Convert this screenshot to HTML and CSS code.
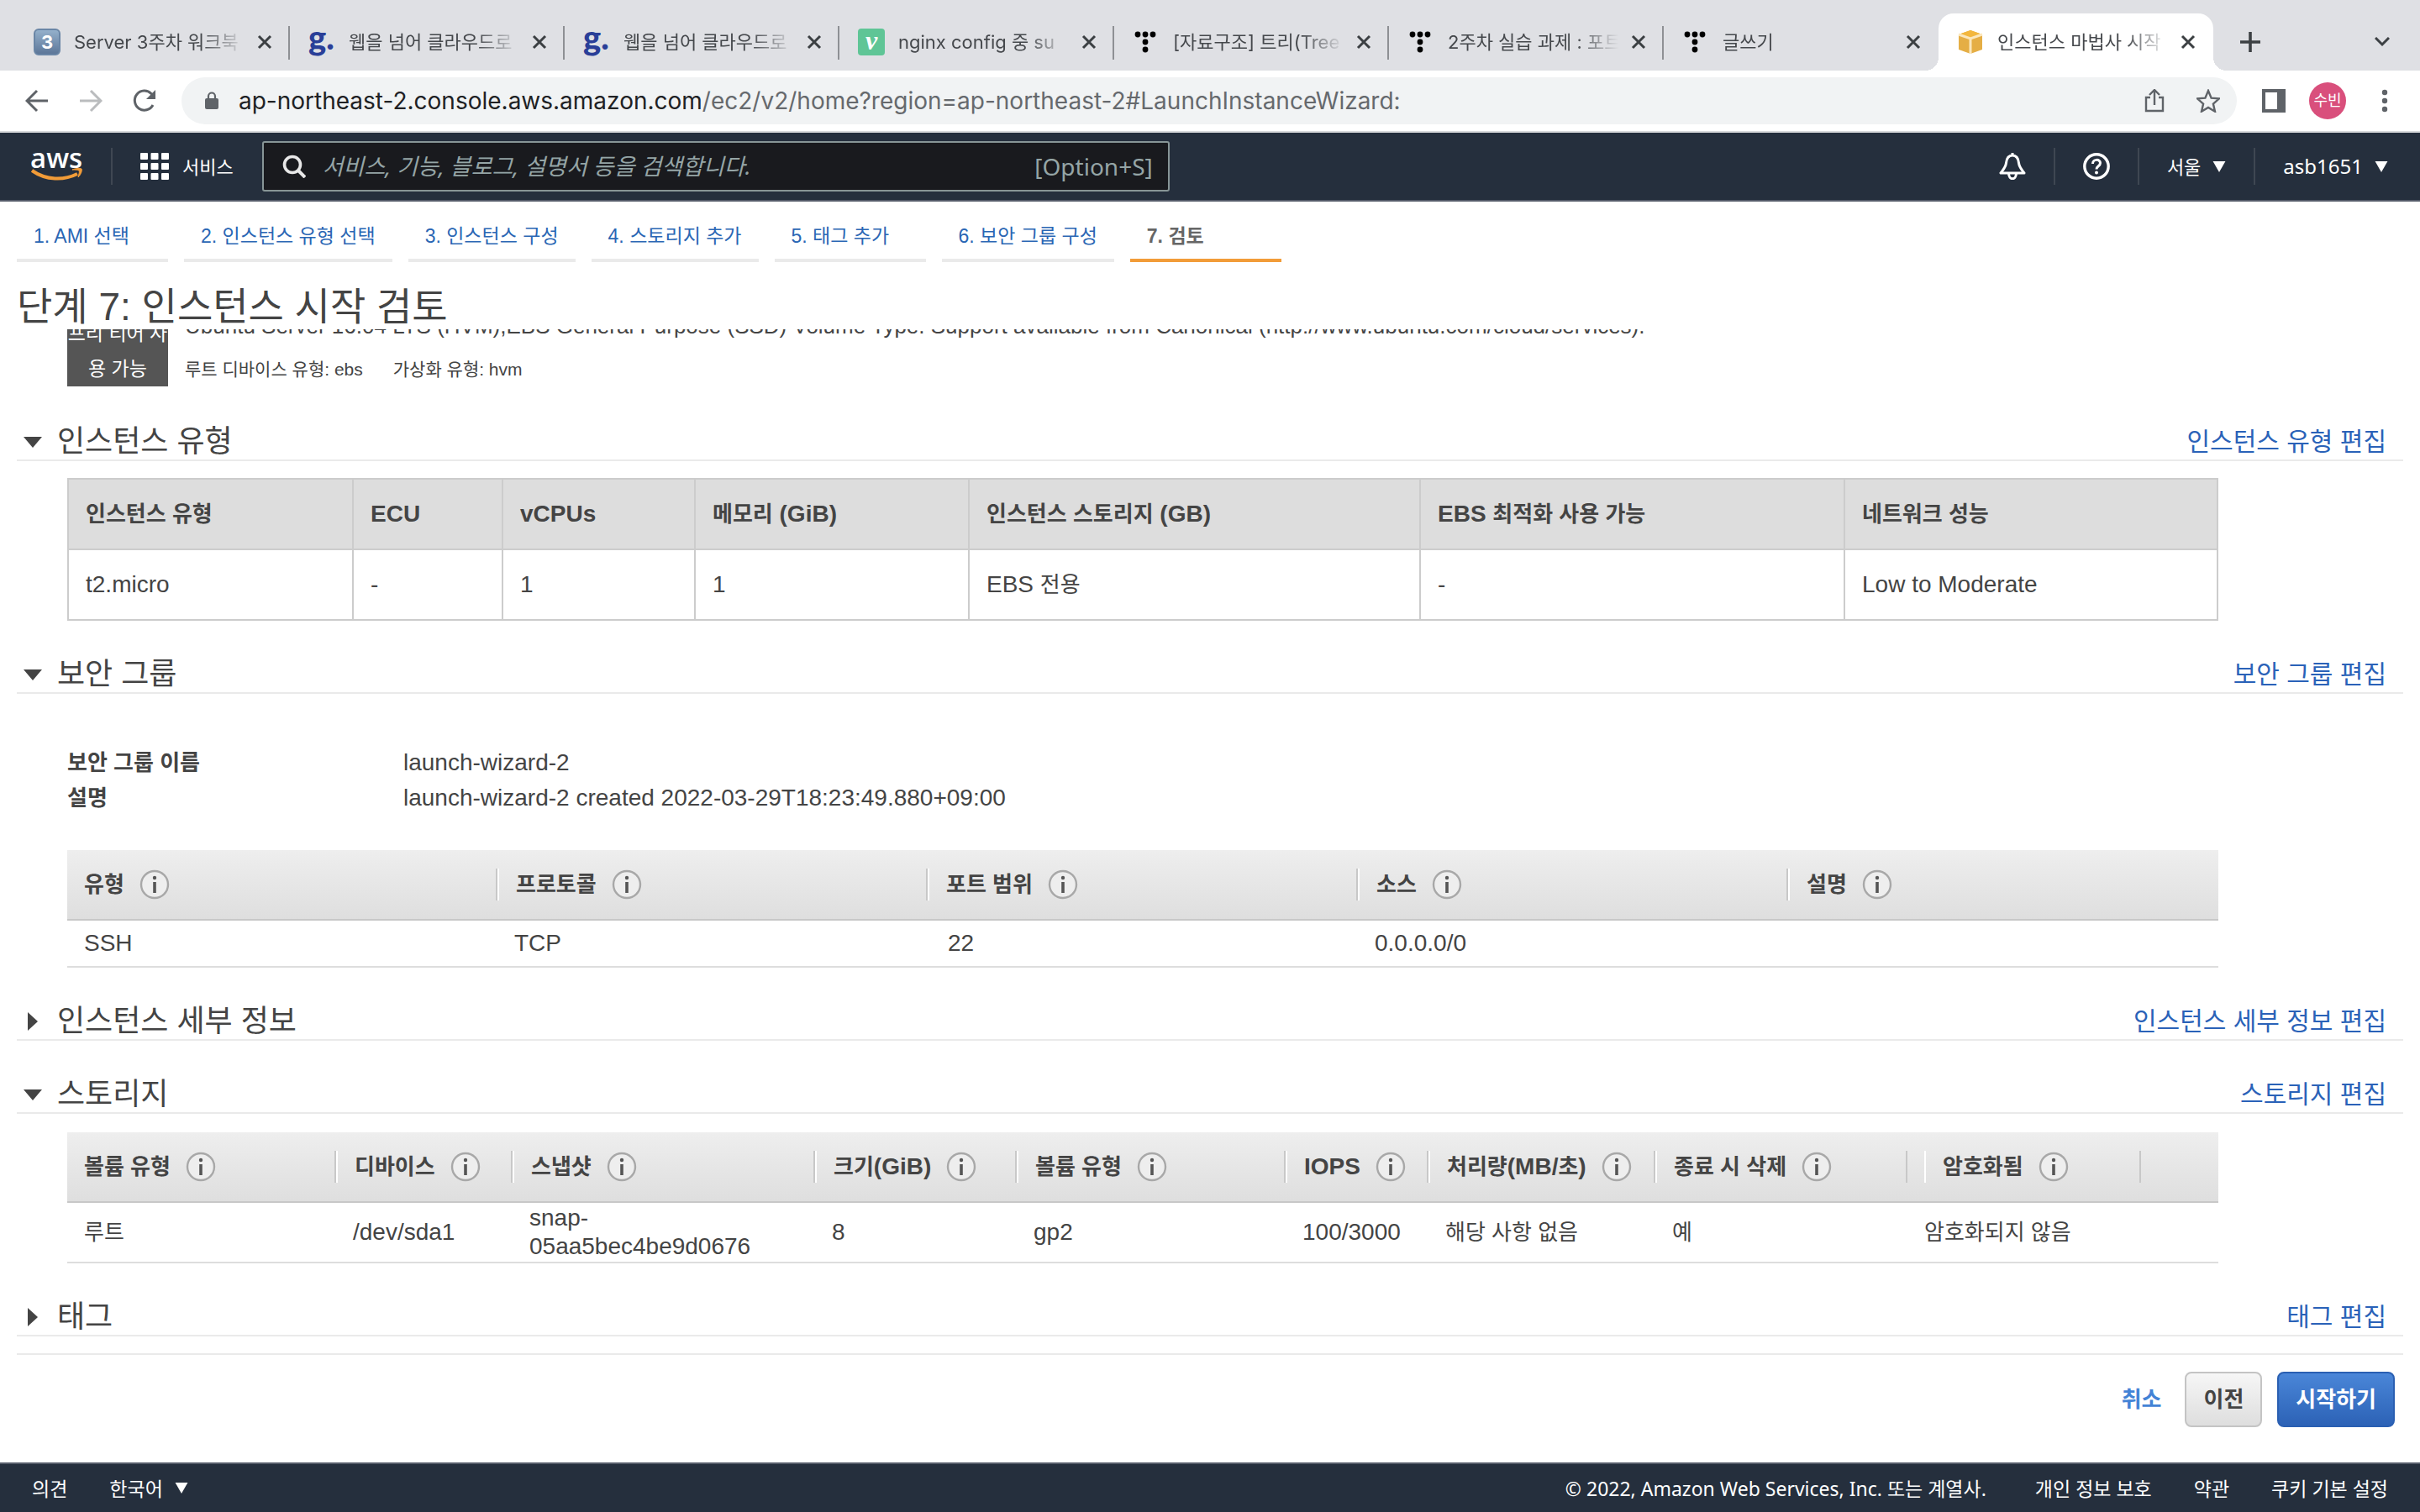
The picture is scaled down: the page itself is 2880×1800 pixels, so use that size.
FILE: index.html
```html
<!DOCTYPE html>
<html lang="ko">
<head>
<meta charset="utf-8">
<meta name="viewport" content="width=device-width, initial-scale=1">
<title>인스턴스 마법사 시작</title>
<link rel="stylesheet" href="styles.css">
</head>
<body>
<svg class="defs" aria-hidden="true">
  <symbol id="x" viewBox="0 0 20 20"><path d="M3 3l14 14M17 3L3 17" stroke="currentColor" stroke-width="3" fill="none"/></symbol>
  <symbol id="t" viewBox="0 0 28 28"><g fill="#000"><circle cx="4" cy="5" r="3.4"/><circle cx="13" cy="5" r="3.4"/><circle cx="22" cy="5" r="3.4"/><circle cx="13" cy="14" r="3.4"/><circle cx="13" cy="23" r="3.4"/></g></symbol>
  <symbol id="info" viewBox="0 0 36 36"><circle cx="18" cy="18" r="16" fill="#eee" stroke="#a8a8a8" stroke-width="2.4"/><circle cx="18" cy="10" r="2.2" fill="#555"/><path d="M18 15v13" stroke="#555" stroke-width="3.6"/></symbol>
  <symbol id="down" viewBox="0 0 16 14"><path d="M0 0h16L8 14z" fill="currentColor"/></symbol>
</svg>

<div class="tabstrip">
  <div class="tab"><span class="fav keycap">3</span><span class="tab-title">Server 3주차 워크북</span><button class="close" aria-label="닫기"><svg><use href="#x"/></svg></button></div>
  <div class="tab"><span class="fav goorm">g.</span><span class="tab-title">웹을 넘어 클라우드로</span><button class="close" aria-label="닫기"><svg><use href="#x"/></svg></button></div>
  <div class="tab"><span class="fav goorm">g.</span><span class="tab-title">웹을 넘어 클라우드로</span><button class="close" aria-label="닫기"><svg><use href="#x"/></svg></button></div>
  <div class="tab"><span class="fav velog">v</span><span class="tab-title">nginx config 중 su</span><button class="close" aria-label="닫기"><svg><use href="#x"/></svg></button></div>
  <div class="tab"><span class="fav"><svg class="dots"><use href="#t"/></svg></span><span class="tab-title">[자료구조] 트리(Tree</span><button class="close" aria-label="닫기"><svg><use href="#x"/></svg></button></div>
  <div class="tab"><span class="fav"><svg class="dots"><use href="#t"/></svg></span><span class="tab-title">2주차 실습 과제 : 포트</span><button class="close" aria-label="닫기"><svg><use href="#x"/></svg></button></div>
  <div class="tab last"><span class="fav"><svg class="dots"><use href="#t"/></svg></span><span class="tab-title">글쓰기</span><button class="close" aria-label="닫기"><svg><use href="#x"/></svg></button></div>
  <div class="tab active"><span class="fav"><svg viewBox="0 0 32 32"><path d="M2 7l14-5 14 5v18l-14 5-14-5z" fill="#e5ae45"/><path d="M2 7l14-5 14 5-14 5z" fill="#f3b73e"/><path d="M2 7l14 5 14-5M16 12v18" stroke="#fbe7bd" stroke-width="3" fill="none"/></svg></span><span class="tab-title">인스턴스 마법사 시작</span><button class="close" aria-label="닫기"><svg><use href="#x"/></svg></button></div>
  <button class="newtab" aria-label="새 탭"><svg viewBox="0 0 24 24"><path d="M12 0v24M0 12h24" stroke="#3c4043" stroke-width="3.6"/></svg></button>
  <button class="tabsearch" aria-label="탭 검색"><svg viewBox="0 0 18 12"><path d="M1 1l8 8 8-8" stroke="#3c4043" stroke-width="3" fill="none"/></svg></button>
</div>

<div class="toolbar">
  <button class="nav-btn" aria-label="뒤로"><svg viewBox="0 0 28 28"><path d="M27 14H3M14 2L2 14l12 12" stroke="#5f6368" stroke-width="3" fill="none"/></svg></button>
  <button class="nav-btn" aria-label="앞으로"><svg viewBox="0 0 28 28"><path d="M1 14h24M14 2l12 12-12 12" stroke="#babcbe" stroke-width="3" fill="none"/></svg></button>
  <button class="nav-btn" aria-label="새로고침"><svg viewBox="0 0 28 28"><path d="M24 19a11.500 11.500 0 1 1-2-13.500l3 3" stroke="#5f6368" stroke-width="3" fill="none"/><path d="M27 1v11H16z" fill="#5f6368"/></svg></button>
  <div class="omnibox">
    <svg class="lock" viewBox="0 0 16 22"><rect y="8" width="16" height="13" rx="2" fill="#5f6368"/><path d="M4 9V5.500a4 4 0 0 1 8 0V9" stroke="#5f6368" stroke-width="2.200" fill="none"/></svg>
    <span class="url"><b>ap-northeast-2.console.aws.amazon.com</b>/ec2/v2/home?region=ap-northeast-2#LaunchInstanceWizard:</span>
    <button class="nav-btn" aria-label="공유"><svg viewBox="0 0 28 28"><path d="M9 10H4v16h20V10h-5M14 19V2M8 7l6-6 6 6" stroke="#5f6368" stroke-width="2.400" fill="none"/></svg></button>
    <button class="nav-btn" aria-label="북마크"><svg viewBox="0 0 28 28"><path d="M14 2l3.600 8.600 9.400.8-7.100 6.200 2.100 9.100L14 21.900l-8 4.800 2.100-9.100L1 11.400l9.400-.8z" stroke="#5f6368" stroke-width="2.400" fill="none"/></svg></button>
  </div>
  <button class="nav-btn" aria-label="측면 패널"><svg viewBox="0 0 28 28"><path d="M0 0h28v28H0zM4 4v20h14V4z" fill="#5f6368" fill-rule="evenodd"/></svg></button>
  <button class="profile">수빈</button>
  <button class="nav-btn menu" aria-label="메뉴"><svg viewBox="0 0 28 28"><g fill="#5f6368"><circle cx="14" cy="4" r="3.200"/><circle cx="14" cy="14" r="3.200"/><circle cx="14" cy="24" r="3.200"/></g></svg></button>
</div>

<header class="aws">
  <a class="logo" href="#" aria-label="AWS"><span>aws</span><svg viewBox="0 0 64 16"><path d="M2 3c17 12 38 12 54 4" stroke="#f29c38" stroke-width="4" fill="none"/><path d="M50 2c5-2 10-2 11-1s0 6-4 10c1-4 2-7 1-8s-4-1-8-1z" fill="#f29c38" stroke="#f29c38"/></svg></a>
  <a class="services" href="#"><svg viewBox="0 0 34 32"><g fill="#fff"><rect width="9" height="8" rx="1"/><rect x="12.500" width="9" height="8" rx="1"/><rect x="25" width="9" height="8" rx="1"/><rect y="12" width="9" height="8" rx="1"/><rect x="12.500" y="12" width="9" height="8" rx="1"/><rect x="25" y="12" width="9" height="8" rx="1"/><rect y="24" width="9" height="8" rx="1"/><rect x="12.500" y="24" width="9" height="8" rx="1"/><rect x="25" y="24" width="9" height="8" rx="1"/></g></svg>서비스</a>
  <label class="search">
    <svg viewBox="0 0 28 28"><circle cx="12" cy="12" r="9.500" stroke="#e8e8e8" stroke-width="3.600" fill="none"/><path d="M18.500 18.500L27 27" stroke="#e8e8e8" stroke-width="4"/></svg>
    <input type="search" aria-label="검색" placeholder="서비스, 기능, 블로그, 설명서 등을 검색합니다.">
    <span>[Option+S]</span>
  </label>
  <nav class="account">
    <a href="#" aria-label="알림"><svg class="ico" viewBox="0 0 32 32"><path d="M16 3c-5 0-7 4-7.500 9-.5 5-3.500 8-6.500 12h28c-3-4-6-7-6.500-12-.5-5-2.500-9-7.500-9z" stroke="#fff" stroke-width="3" fill="none" stroke-linejoin="round"/><path d="M11.500 24c0 9 9 9 9 0" stroke="#fff" stroke-width="3" fill="none"/><path d="M16 0v4" stroke="#fff" stroke-width="3"/></svg></a>
    <a href="#" aria-label="도움말"><svg class="ico" viewBox="0 0 32 32"><circle cx="16" cy="16" r="14.200" stroke="#fff" stroke-width="3.400" fill="none"/><path d="M11.500 13c0-6 9-6 9-1 0 4-4.500 3.500-4.500 7.500" stroke="#fff" stroke-width="3" fill="none"/><circle cx="16" cy="23.600" r="2" fill="#fff"/></svg></a>
    <a href="#">서울<svg class="caret"><use href="#down"/></svg></a>
    <a href="#" class="latin">asb1651<svg class="caret"><use href="#down"/></svg></a>
  </nav>
</header>

<main>
  <nav class="steps">
    <a href="#">1. AMI 선택</a><a href="#">2. 인스턴스 유형 선택</a><a href="#">3. 인스턴스 구성</a><a href="#">4. 스토리지 추가</a><a href="#">5. 태그 추가</a><a href="#">6. 보안 그룹 구성</a><a href="#" class="current" aria-current="step">7. 검토</a>
  </nav>
  <h1>단계 7: 인스턴스 시작 검토</h1>

  <div class="scroll">
    <div class="ami">
      <div class="badge">프리 티어 사<br>용 가능</div>
      <div class="ami-text">
        <p>Ubuntu Server 16.04 LTS (HVM),EBS General Purpose (SSD) Volume Type. Support available from Canonical (http://www.ubuntu.com/cloud/services).</p>
        <p class="meta"><span>루트 디바이스 유형: ebs</span><span>가상화 유형: hvm</span></p>
      </div>
    </div>

    <section>
      <div class="head"><h2><button><svg class="tri" viewBox="0 0 24 24"><path d="M1 6h22L12 19z" fill="#444"/></svg>인스턴스 유형</button></h2><a href="#">인스턴스 유형 편집</a></div>
      <table class="grid">
        <colgroup><col class="w339"><col class="w178"><col class="w229"><col class="w326"><col class="w537"><col class="w505"><col></colgroup>
        <thead><tr><th class="ko">인스턴스 유형</th><th>ECU</th><th>vCPUs</th><th><span class="ko">메모리</span> (GiB)</th><th><span class="ko">인스턴스 스토리지</span> (GB)</th><th>EBS <span class="ko">최적화 사용 가능</span></th><th class="ko">네트워크 성능</th></tr></thead>
        <tbody><tr><td>t2.micro</td><td>-</td><td>1</td><td>1</td><td>EBS <span class="ko">전용</span></td><td>-</td><td>Low to Moderate</td></tr></tbody>
      </table>
    </section>

    <section>
      <div class="head"><h2><button><svg class="tri" viewBox="0 0 24 24"><path d="M1 6h22L12 19z" fill="#444"/></svg>보안 그룹</button></h2><a href="#">보안 그룹 편집</a></div>
      <dl>
        <dt>보안 그룹 이름</dt><dd>launch-wizard-2</dd>
        <dt>설명</dt><dd>launch-wizard-2 created 2022-03-29T18:23:49.880+09:00</dd>
      </dl>
      <table class="list">
        <thead><tr>
          <th><div class="ko">유형<svg><use href="#info"/></svg></div></th><th><div class="ko">프로토콜<svg><use href="#info"/></svg></div></th><th><div class="ko">포트 범위<svg><use href="#info"/></svg></div></th><th><div class="ko">소스<svg><use href="#info"/></svg></div></th><th><div class="ko">설명<svg><use href="#info"/></svg></div></th>
        </tr></thead>
        <tbody><tr><td>SSH</td><td>TCP</td><td class="num">22</td><td>0.0.0.0/0</td><td></td></tr></tbody>
      </table>
    </section>

    <section>
      <div class="head"><h2><button><svg class="tri" viewBox="0 0 24 24"><path d="M6 1v22l12-11z" fill="#444"/></svg>인스턴스 세부 정보</button></h2><a href="#">인스턴스 세부 정보 편집</a></div>
    </section>

    <section>
      <div class="head"><h2><button><svg class="tri" viewBox="0 0 24 24"><path d="M1 6h22L12 19z" fill="#444"/></svg>스토리지</button></h2><a href="#">스토리지 편집</a></div>
      <table class="list storage">
        <colgroup><col class="w320"><col class="w210"><col class="w360"><col class="w240"><col class="w320"><col class="w170"><col class="w270"><col class="w300"><col class="w278"><col></colgroup>
        <thead><tr>
          <th><div class="ko">볼륨 유형<svg><use href="#info"/></svg></div></th>
          <th><div class="ko">디바이스<svg><use href="#info"/></svg></div></th>
          <th><div class="ko">스냅샷<svg><use href="#info"/></svg></div></th>
          <th><div><span class="ko">크기</span>(GiB)<svg><use href="#info"/></svg></div></th>
          <th><div class="ko">볼륨 유형<svg><use href="#info"/></svg></div></th>
          <th><div>IOPS<svg><use href="#info"/></svg></div></th>
          <th><div><span class="ko">처리량</span>(MB/<span class="ko">초</span>)<svg><use href="#info"/></svg></div></th>
          <th><div class="ko">종료 시 삭제<svg><use href="#info"/></svg></div></th>
          <th class="inset"><div class="ko">암호화됨<svg><use href="#info"/></svg></div></th>
          <th></th>
        </tr></thead>
        <tbody><tr><td class="ko">루트</td><td>/dev/sda1</td><td>snap-<br>05aa5bec4be9d0676</td><td>8</td><td>gp2</td><td>100/3000</td><td class="ko">해당 사항 없음</td><td class="ko">예</td><td class="ko">암호화되지 않음</td><td></td></tr></tbody>
      </table>
    </section>

    <section>
      <div class="head"><h2><button><svg class="tri" viewBox="0 0 24 24"><path d="M6 1v22l12-11z" fill="#444"/></svg>태그</button></h2><a href="#">태그 편집</a></div>
    </section>
  </div>

  <div class="actions">
    <a href="#">취소</a><button class="btn">이전</button><button class="btn primary">시작하기</button>
  </div>
</main>

<footer>
  <a href="#">의견</a>
  <a href="#">한국어<svg class="caret"><use href="#down"/></svg></a>
  <span class="copy">© 2022, Amazon Web Services, Inc. 또는 계열사.</span>
  <a href="#">개인 정보 보호</a>
  <a href="#">약관</a>
  <a href="#">쿠키 기본 설정</a>
</footer>
</body>
</html>
```
FILE: styles.css
```css
* { box-sizing: border-box; }
body {
  margin: 0;
  min-height: 100vh;
  display: flex;
  flex-direction: column;
  background: #fff;
  color: #444;
  font: 28px/34px "Liberation Sans", "Noto Sans CJK KR", sans-serif;
}
a { text-decoration: none; color: inherit; }
button { border: 0; padding: 0; background: none; font: inherit; color: inherit; }
svg { display: block; flex: none; }
h1, h2, p, dl, dd { margin: 0; font-weight: 400; }
.defs { position: absolute; width: 0; height: 0; }
.ko { font-size: 26px; }

/* browser tabs */
.tabstrip {
  display: flex;
  height: 84px;
  padding: 16px 36px 0 18px;
  background: #dfe0e4;
  color: #45484c;
  font: 22px/32px Inter, "Noto Sans CJK KR", sans-serif;
}
.tab {
  position: relative;
  flex: 0 1 327px;
  min-width: 0;
  display: flex;
  align-items: center;
  padding: 0 20px 0 22px;
}
.tab::after {
  content: "";
  position: absolute;
  right: 0;
  top: 15px;
  width: 2px;
  height: 40px;
  background: #8e9094;
}
.tab.active::after, .tab.last::after { display: none; }
.tab.active { background: #fff; border-radius: 18px 18px 0 0; }
.tab.active::before {
  content: "";
  position: absolute;
  left: -16px;
  right: -16px;
  bottom: 0;
  height: 16px;
  background:
    radial-gradient(circle at 0 0, #dfe0e4 16px, #fff 16px) left / 16px 16px no-repeat,
    radial-gradient(circle at 100% 0, #dfe0e4 16px, #fff 16px) right / 16px 16px no-repeat;
}
.fav { flex: none; width: 32px; height: 32px; margin-right: 16px; }
.fav svg { width: 32px; height: 32px; }
.fav .dots { width: 28px; height: 28px; margin: 2px 0 0 2px; }
.keycap { border-radius: 6px; background: linear-gradient(#94b0cb, #5d7799); border: 2px solid #6a86a6; color: #fff; font-weight: 700; line-height: 28px; text-align: center; }
.goorm { color: #2a3f98; font: 900 40px/20px Lato, sans-serif; }
.velog { border-radius: 4px; background: #5fc596; color: #fff; font: italic 700 32px/28px "Liberation Serif", serif; text-align: center; }
.tab-title {
  flex: 1;
  overflow: hidden;
  white-space: nowrap;
  mask-image: linear-gradient(to right, #000 75%, transparent);
}
.close { margin-left: 14px; color: #3c4043; }
.close svg { width: 20px; height: 20px; }
.newtab { margin-left: 32px; }
.newtab svg { width: 24px; height: 24px; }
.tabsearch { margin-left: auto; }
.tabsearch svg { width: 18px; height: 12px; }

/* address bar */
.toolbar {
  display: flex;
  align-items: center;
  gap: 36px;
  height: 74px;
  padding: 0 28px 0 30px;
  border-bottom: 2px solid #d8dadc;
}
.nav-btn svg { width: 28px; height: 28px; }
.menu { margin-left: -4px; }
.omnibox {
  flex: 1;
  display: flex;
  align-items: center;
  gap: 36px;
  height: 56px;
  margin-left: -6px;
  margin-right: -6px;
  padding: 0 20px 0 28px;
  border-radius: 28px;
  background: #f1f3f4;
  color: #66696d;
  font: 28px/36px Inter, sans-serif;
}
.lock { width: 16px; height: 22px; margin-right: -12px; }
.url { flex: 1; overflow: hidden; white-space: nowrap; }
.url b { font-weight: 400; color: #202124; }
.profile { width: 44px; height: 44px; margin-left: -8px; border-radius: 50%; background: #d94f7c; color: #fff; font-size: 18px; white-space: nowrap; }

/* console header */
.aws {
  display: flex;
  align-items: center;
  height: 82px;
  padding: 0 38px 0 36px;
  background: #252f3d;
  border-bottom: 2px solid #555c69;
  color: #fff;
  font: 22px/32px "Noto Sans", "Noto Sans CJK KR", sans-serif;
}
.logo { width: 98px; height: 44px; border-right: 2px solid #3f4752; }
.logo span { display: block; font: 600 33px/24px "Open Sans", sans-serif; }
.logo svg { width: 64px; height: 16px; }
.services { display: flex; align-items: center; gap: 16px; margin: 0 34px 0 33px; }
.services svg { width: 34px; height: 32px; }
.search {
  display: flex;
  align-items: center;
  flex: 0 1 1080px;
  height: 60px;
  padding: 0 18px 0 22px;
  border: 2px solid #879596;
  border-radius: 3px;
  background: #191a1e;
  color: #95a5a6;
  font-size: 28px;
}
.search svg { width: 28px; height: 28px; margin-right: 20px; }
.search input { flex: 1; min-width: 0; border: 0; padding: 0; background: none; outline: 0; color: #fff; font: italic 27px/36px "Noto Sans", "Noto Sans CJK KR", sans-serif; }
.search input::placeholder { color: #95a5a6; opacity: 1; }
.account { display: flex; margin-left: auto; }
.account a { display: flex; align-items: center; height: 44px; padding: 0 33px; border-left: 2px solid #3f4752; }
.account a:first-child { border: 0; }
.account a:last-child { padding-right: 0; }
.account .latin { font-size: 24px; }
.ico { width: 32px; height: 32px; }
.caret { width: 16px; height: 13px; margin-left: 14px; }

/* wizard */
main { flex: 1; padding: 0 20px; }
.steps { display: flex; gap: 19px; font-size: 23px; line-height: 42px; color: #2a66b4; }
.steps a { min-width: 180px; padding: 20px 20px 6px; border-bottom: 4px solid #eaeaea; white-space: nowrap; }
.steps .current { color: #666; font-weight: 700; border-color: #f29c38; }
h1 { padding-top: 26px; font-size: 46px; line-height: 54px; }
.scroll { overflow: hidden; }
.ami { display: flex; align-items: flex-end; gap: 20px; margin: -30px 0 -4px 60px; }
.badge { flex: none; width: 120px; margin-bottom: 6px; background: #555; color: #fff; font-size: 23px; line-height: 42px; text-align: center; white-space: nowrap; }
.ami-text { font-size: 26px; line-height: 52px; white-space: nowrap; }
.meta { display: flex; gap: 36px; font-size: 21px; }

.head {
  display: flex;
  justify-content: space-between;
  margin-top: 34px;
  padding: 8px 20px 0 7px;
  border-bottom: 2px solid #eaeaea;
  line-height: 43px;
}
.head h2 { font-size: 36px; }
.head h2 button { display: flex; align-items: center; gap: 17px; }
.head a { font-size: 30px; color: #2a62b8; }
.tri { width: 24px; height: 24px; }

table { border-spacing: 0; table-layout: fixed; width: calc(100% - 280px); margin-left: 60px; text-align: left; }
th, td { padding: 0 0 0 20px; white-space: nowrap; }
.grid { margin-top: 20px; border-collapse: collapse; }
.grid th, .grid td { height: 84px; border: 2px solid #ccc; }
.grid th { background: #ddd; }

dl { display: grid; grid-template-columns: 400px 1fr; margin: 61px 0 41px 60px; line-height: 42px; }
dt { font-size: 26px; font-weight: 700; }

.list thead { background: linear-gradient(#eee, #dedede); }
.list th { height: 84px; padding: 0; border-bottom: 2px solid #c8c8c8; }
.list th div { display: flex; align-items: center; height: 38px; padding-left: 20px; border-left: 2px solid #fff; border-right: 2px solid #c8c8c8; }
.list th:first-child div { border-left: 0; }
.list:not(.storage) th:last-child div { border-right: 0; }
.list th.inset { padding-left: 20px; }
.list th svg { width: 36px; height: 36px; margin-left: 18px; }
.list td { height: 56px; border-bottom: 2px solid #ddd; }
.list td.num { padding-left: 24px; }
.storage { margin-top: 22px; }
.storage td { height: 72px; }

.w339 { width: 339px; } .w178 { width: 178px; } .w229 { width: 229px; } .w326 { width: 326px; }
.w537 { width: 537px; } .w505 { width: 505px; } .w320 { width: 320px; } .w210 { width: 210px; }
.w360 { width: 360px; } .w240 { width: 240px; } .w170 { width: 170px; } .w270 { width: 270px; }
.w300 { width: 300px; } .w278 { width: 278px; }

.actions {
  display: flex;
  justify-content: flex-end;
  align-items: center;
  gap: 18px;
  margin-top: 20px;
  padding: 20px 10px 42px 0;
  border-top: 2px solid #eaeaea;
  font-size: 26px;
  font-weight: 700;
}
.actions a { margin-right: 10px; color: #4383d6; }
.btn { height: 66px; padding: 0 20px; border: 2px solid #c4c4c4; border-radius: 8px; background: linear-gradient(#f6f6f6, #dedede); }
.btn.primary { border-color: #2a5fb2; background: linear-gradient(#4a86d8, #2c62b6); color: #fff; }

footer {
  display: flex;
  align-items: center;
  height: 59px;
  padding: 0 38px;
  background: #252f3d;
  border-top: 2px solid #555c69;
  color: #fff;
  font: 23px/32px "Noto Sans", "Noto Sans CJK KR", sans-serif;
  gap: 50px;
}
footer a { display: flex; align-items: center; }
.copy { margin-left: auto; margin-right: 8px; }
```
